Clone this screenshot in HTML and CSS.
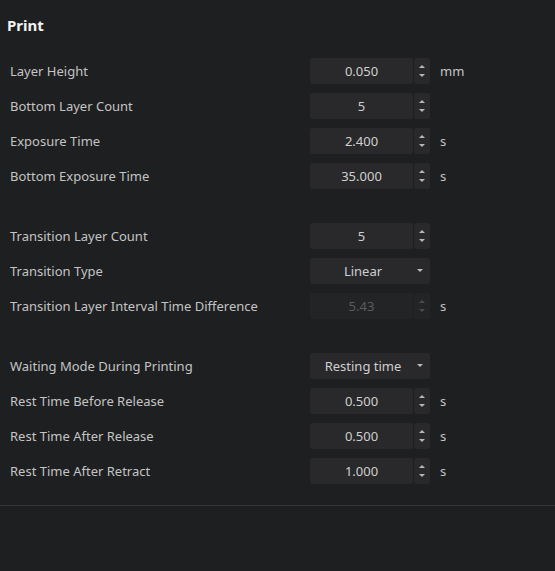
FILE: index.html
```html
<!DOCTYPE html>
<html lang="en">
<head>
  <meta charset="UTF-8" />
  <meta name="viewport" content="width=device-width, initial-scale=1.0" />
  <title>Print</title>
  <link rel="stylesheet" href="styles.css">
</head>
<body>

  <div class="panel">
    <h2 class="title">Print</h2>

    <div class="group">
      <div class="row">
        <span class="label">Layer Height</span>
        <div class="spin"><span class="value">0.050</span><span class="arrows"><i class="up"></i><i class="down"></i></span></div>
        <span class="unit">mm</span>
      </div>
      <div class="row">
        <span class="label">Bottom Layer Count</span>
        <div class="spin"><span class="value">5</span><span class="arrows"><i class="up"></i><i class="down"></i></span></div>
        <span class="unit"></span>
      </div>
      <div class="row">
        <span class="label">Exposure Time</span>
        <div class="spin"><span class="value">2.400</span><span class="arrows"><i class="up"></i><i class="down"></i></span></div>
        <span class="unit">s</span>
      </div>
      <div class="row">
        <span class="label">Bottom Exposure Time</span>
        <div class="spin"><span class="value">35.000</span><span class="arrows"><i class="up"></i><i class="down"></i></span></div>
        <span class="unit">s</span>
      </div>
    </div>

    <div class="group">
      <div class="row">
        <span class="label">Transition Layer Count</span>
        <div class="spin"><span class="value">5</span><span class="arrows"><i class="up"></i><i class="down"></i></span></div>
        <span class="unit"></span>
      </div>
      <div class="row">
        <span class="label">Transition Type</span>
        <div class="select"><span class="value">Linear</span><i class="caret"></i></div>
        <span class="unit"></span>
      </div>
      <div class="row">
        <span class="label">Transition Layer Interval Time Difference</span>
        <div class="spin disabled"><span class="value">5.43</span><span class="arrows"><i class="up"></i><i class="down"></i></span></div>
        <span class="unit">s</span>
      </div>
    </div>

    <div class="group">
      <div class="row">
        <span class="label">Waiting Mode During Printing</span>
        <div class="select"><span class="value">Resting time</span><i class="caret"></i></div>
        <span class="unit"></span>
      </div>
      <div class="row">
        <span class="label">Rest Time Before Release</span>
        <div class="spin"><span class="value">0.500</span><span class="arrows"><i class="up"></i><i class="down"></i></span></div>
        <span class="unit">s</span>
      </div>
      <div class="row">
        <span class="label">Rest Time After Release</span>
        <div class="spin"><span class="value">0.500</span><span class="arrows"><i class="up"></i><i class="down"></i></span></div>
        <span class="unit">s</span>
      </div>
      <div class="row">
        <span class="label">Rest Time After Retract</span>
        <div class="spin"><span class="value">1.000</span><span class="arrows"><i class="up"></i><i class="down"></i></span></div>
        <span class="unit">s</span>
      </div>
    </div>
  </div>

  <hr class="divider">

</body>
</html>
```

FILE: styles.css
```css
body {
  font-family: "Noto Sans", "Open Sans", sans-serif;
  background: #1e1f21;
  color: #c4c4c4;
  margin: 0;
  padding: 0;
  height: 571px;
  overflow: hidden;
}

.panel {
  padding: 14px 0 0 0;
}

.title {
  font-size: 15px;
  font-weight: bold;
  color: #f2f2f2;
  margin: 0 0 22px 7px;
  line-height: 22px;
}

.group {
  display: flex;
  flex-direction: column;
  gap: 9px;
  margin-bottom: 34px;
}

.group:last-child {
  margin-bottom: 0;
}

.row {
  display: flex;
  align-items: center;
  height: 26px;
  font-size: 13px;
}

.label {
  width: 300px;
  padding-left: 10px;
}

.spin, .select {
  display: flex;
  height: 26px;
}

.spin .value {
  width: 103px;
  background: #29292b;
  border-radius: 2px;
  display: flex;
  align-items: center;
  justify-content: center;
  color: #cfcfcf;
}

.arrows {
  width: 16px;
  margin-left: 1px;
  background: #29292b;
  border-radius: 2px;
  display: flex;
  flex-direction: column;
  align-items: center;
  justify-content: center;
  gap: 6px;
}

.up, .down {
  width: 0;
  height: 0;
  border-left: 3px solid transparent;
  border-right: 3px solid transparent;
}

.up {
  border-bottom: 3px solid #b8b8b8;
}

.down {
  border-top: 3px solid #b8b8b8;
}

.disabled .value {
  background: #232426;
  color: #5a5b5d;
}

.disabled .arrows {
  background: #232426;
}

.disabled .up {
  border-bottom-color: #4a4b4d;
}

.disabled .down {
  border-top-color: #4a4b4d;
}

.select {
  width: 120px;
  background: #29292b;
  border-radius: 2px;
  align-items: center;
  position: relative;
}

.select .value {
  flex: 1;
  text-align: center;
  padding-right: 14px;
  color: #cfcfcf;
}

.caret {
  position: absolute;
  right: 7px;
  top: 11px;
  border-left: 3px solid transparent;
  border-right: 3px solid transparent;
  border-top: 3px solid #b8b8b8;
}

.unit {
  margin-left: 10px;
  color: #c4c4c4;
}

.divider {
  border: none;
  border-top: 1px solid #333437;
  margin: 21px 0 0 0;
}
```
